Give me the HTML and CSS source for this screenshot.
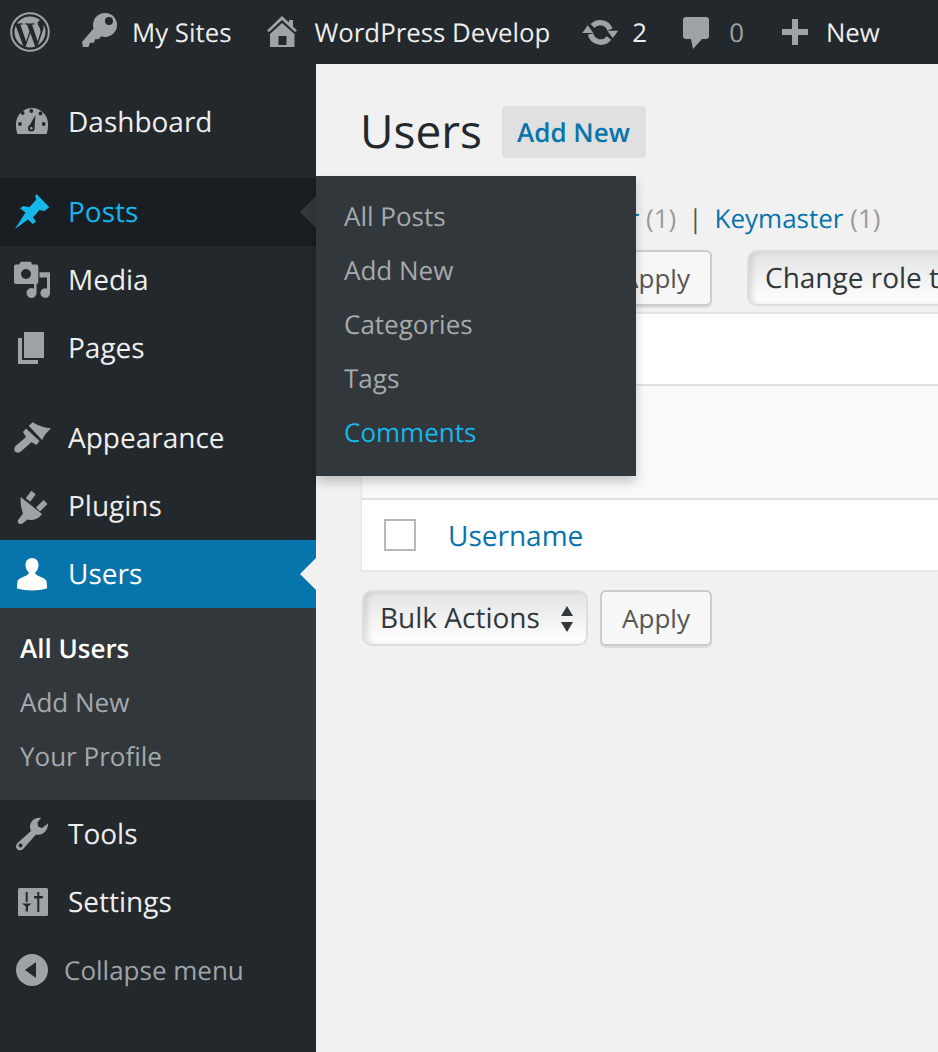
FILE: index.html
```html
<!DOCTYPE html>
<html lang="en">
<head>
<meta charset="utf-8">
<title>Users</title>
<link rel="stylesheet" href="styles.css">
</head>
<body>
<header class="adminbar">
  <a class="bar-item wp"><svg class="bar-logo" viewBox="0 0 40 40"><circle cx="20" cy="20" r="18.8" fill="none" stroke="#9ea3a8" stroke-width="2"/><path fill="#9ea3a8" d="M4.5 20c0 6.100 3.600 11.400 8.700 13.900L5.800 13.700C5 15.600 4.500 17.700 4.500 20zm26-.8c0-1.900-.7-3.200-1.300-4.300-.8-1.300-1.500-2.400-1.500-3.600 0-1.400 1-2.700 2.500-2.700h.2C27.600 6 24 4.500 20 4.500c-5.400 0-10.200 2.800-13 7h1c1.600 0 4.100-.2 4.100-.2.8 0 .9 1.200.1 1.300 0 0-.8.1-1.800.1l5.700 16.900 3.400-10.200-2.400-6.700c-.8 0-1.600-.1-1.600-.1-.8 0-.7-1.300.1-1.300 0 0 2.600.2 4.100.2 1.600 0 4.100-.2 4.100-.2.8 0 .9 1.200.1 1.300 0 0-.8.1-1.800.1l5.600 16.800 1.600-5.200c.7-2.100 1.200-3.700 1.200-5zM20.300 21.200l-4.700 13.600c1.400.4 2.900.6 4.400.6 1.800 0 3.600-.3 5.200-.9l-.1-.2zM33.600 12.400c.1.500.1 1 .1 1.600 0 1.600-.3 3.300-1.200 5.500l-4.700 13.700c4.600-2.700 7.700-7.700 7.700-13.400 0-2.700-.7-5.200-1.900-7.400z"/></svg></a>
  <a class="bar-item sites"><svg class="bar-icon key" viewBox="0 0 36 36"><path fill="#9ea3a8" fill-rule="evenodd" d="M23 0a12 12 0 1 1-4 23.300L17 26l-4 .2-1 3.600H8l-1.500 4.200H1L0 29l11.500-13.500A12 12 0 0 1 23 0zm4 4a4 4 0 1 0 0 8 4 4 0 0 0 0-8z"/></svg><span>My Sites</span></a>
  <a class="bar-item site"><svg class="bar-icon home" viewBox="0 0 30 32"><path fill="#9ea3a8" fill-rule="evenodd" d="M15 0l7 6.500V4h4v6.500l4 4-2 1.500L15 4 2 16l-2-1.500zM15 7l12.500 11v13H3V18zm-3.500 13v9h8v-9z"/></svg><span>WordPress Develop</span></a>
  <a class="bar-item updates"><svg class="bar-icon refresh" viewBox="0 0 36 28"><g fill="none" stroke="#9ea3a8" stroke-width="5.500"><path d="M10.500 8A10.500 10.500 0 0 1 28 11.500"/><path d="M27 20A10.500 10.500 0 0 1 8.500 16"/></g><path fill="#9ea3a8" d="M25.300 12.700h11L30.800 20zM.3 15h11L5.800 7.300z"/></svg><span>2</span></a>
  <a class="bar-item comments"><svg class="bar-icon bubble" viewBox="0 0 26 32"><path fill="#9ea3a8" d="M3 0h20a3 3 0 0 1 3 3v16a3 3 0 0 1-3 3h-4l-9 10-2-10H3a3 3 0 0 1-3-3V3a3 3 0 0 1 3-3z"/></svg><span class="zero">0</span></a>
  <a class="bar-item new"><svg class="bar-icon plus" viewBox="0 0 26 26"><path fill="#9ea3a8" d="M10 0h6v10h10v6H16v10h-6V16H0v-6h10z"/></svg><span>New</span></a>
</header>
<div class="layout">
  <nav class="sidebar">
    <ul class="menu">
      <li class="item dash"><svg class="mi" viewBox="0 0 40 40"><path fill="#9ea3a8" d="M5.500 32C4.500 29 4 27 4 22a16 16 0 0 1 32 0c0 5-.5 7-1.500 10z"/><g fill="#23282d"><circle cx="19.300" cy="9" r="1.900"/><circle cx="10.700" cy="11" r="1.900"/><circle cx="28.500" cy="11.500" r="1.900"/><circle cx="8" cy="22" r="1.900"/><circle cx="31.700" cy="22" r="1.900"/><path d="M23.500 13l-1 12.500-5.700-.7z"/><circle cx="19.300" cy="26.300" r="3.300"/></g><circle cx="19.300" cy="26.300" r="1.300" fill="#9ea3a8"/></svg><span>Dashboard</span></li>
      <li class="item current-hover"><svg class="mi" viewBox="0 0 40 40"><path fill="#15b6e8" d="M3 37l10.500-16.500L8 16.300l3.300-2.300 6 1.300L24 8l-.7-5 1.400-.7 12.600 13-5 3.700-5-1-6.300 7.500 3 4.200-3.300 2.300-4.700-4.500z"/></svg><span>Posts</span><i class="notch dark"></i></li>
      <li class="item"><svg class="mi" viewBox="0 0 40 40"><path fill="#9ea3a8" fill-rule="evenodd" d="M8 3l1-1.300h10L20 4.500h4.500q1.800 0 1.800 2V22q0 2-1.800 2H4q-2 0-2-2V6.500q0-2 2-2h3zm6 6a5 5 0 1 0 0 10 5 5 0 0 0 0-10z"/><path fill="#9ea3a8" d="M27.500 12.300H38V33a4.800 4.800 0 1 1-3-4.400V17.500h-7.500zM22 22.500h2.500V33a5 5 0 1 1-2.500-4.300z"/></svg><span>Media</span></li>
      <li class="item"><svg class="mi" viewBox="0 0 40 40"><path fill="#9ea3a8" d="M12 4h20v26H12zM6 10h4v22h16v4H6z"/></svg><span>Pages</span></li>
      <li class="item spaced"><svg class="mi" viewBox="0 0 40 40"><path fill="#9ea3a8" d="M14 10.500L27.500 23l-3 4-5-3-10 9q-3 3-6 1-2.500-2.500 0-6L14 19l-3-5zM16.700 7.700l4-3.400Q30 10 39 10.300l-5.700 6L30 22z"/></svg><span>Appearance</span></li>
      <li class="item"><svg class="mi" viewBox="0 0 40 40"><path fill="#9ea3a8" d="M8.700 11L30 28q-4 6-12 6l-2.500-.5-5 4q-3 1.500-4.500-1-1-2 2-5l3-4q-3-8-2.300-16.500z"/><path stroke="#9ea3a8" stroke-width="5.500" d="M21.500 6.500L16 14M33.500 16L26 23.500"/></svg><span>Plugins</span></li>
      <li class="item active"><svg class="mi" viewBox="0 0 40 40"><path fill="#fff" d="M20 4c4 0 6.500 3 6.500 7 0 3-1.500 6-3.500 8 1 3 8 4 11 7q1 2 1 8.500-7 2-15 2t-15-2q0-6.500 1-8.500c3-3 10-4 11-7-2-2-3.500-5-3.500-8 0-4 2.500-7 6.500-7z"/></svg><span>Users</span><i class="notch light"></i></li>
      <li class="sub">
        <a class="sub-link strong">All Users</a>
        <a class="sub-link">Add New</a>
        <a class="sub-link">Your Profile</a>
      </li>
      <li class="item"><svg class="mi" viewBox="0 0 40 40"><path fill="#9ea3a8" fill-rule="evenodd" d="M29 4c-6-1-11 3-11 9 0 2 .5 3 1 4L5.500 29q-2 2-1.500 4.500 1.500 3.500 5.500 2.500 1.500-.5 2.500-2l12-13.500c6 1.500 12-3.500 12-10.500v-.5L30 14l-4-1.500-.5-4zM8.500 29.500a2 2 0 1 1 0 4 2 2 0 0 1 0-4z"/></svg><span>Tools</span></li>
      <li class="item"><svg class="mi" viewBox="0 0 40 40"><rect x="6" y="6" width="30" height="28" rx="1.500" fill="#9ea3a8"/><path fill="#23282d" d="M13.700 10h2v10h-2zM10 21.500h9.500L16 24.500v5h-2.300v-5zM25.300 10h2v4h4l-1 2.500h-3V30h-2V16.500h-3L22 14h3.300z"/></svg><span>Settings</span></li>
      <li class="collapse"><svg class="round" viewBox="0 0 32 32"><path fill="#9ea3a8" fill-rule="evenodd" d="M16 0a16 16 0 1 1 0 32 16 16 0 0 1 0-32zm4 8L9 16l11 8z"/></svg><span>Collapse menu</span></li>
    </ul>
  </nav>
  <main class="content">
    <div class="heading"><h1>Users</h1><a class="add-new">Add New</a></div>
    <div class="filters"><a class="flink">Subscriber</a> <span class="count">(1)</span><span class="sep">|</span><a class="flink">Keymaster</a> <span class="count">(1)</span></div>
    <div class="tablenav top">
      <span class="select bulk">Bulk Actions<svg class="arrows" viewBox="0 0 14 26"><path fill="#32373c" d="M7 0l6 10H1zM1 16h12L7 26z"/></svg></span>
      <button class="apply">Apply</button>
      <span class="select role">Change role to...</span>
    </div>
    <div class="table">
      <div class="row head"></div>
      <div class="row middle"></div>
      <div class="row user"><span class="check"></span><a class="uname">Username</a></div>
    </div>
    <div class="tablenav bottom">
      <span class="select bulk">Bulk Actions<svg class="arrows" viewBox="0 0 14 26"><path fill="#32373c" d="M7 0l6 10H1zM1 16h12L7 26z"/></svg></span>
      <button class="apply">Apply</button>
    </div>
  </main>
</div>
<div class="flyout">
  <a>All Posts</a>
  <a>Add New</a>
  <a>Categories</a>
  <a>Tags</a>
  <a class="hl">Comments</a>
</div>
</body>
</html>
```
FILE: styles.css
```css
* { box-sizing: border-box; }
html, body { margin: 0; height: 100%; overflow: hidden; }
body { font-family: "Open Sans", sans-serif; font-size: 28px; text-rendering: geometricPrecision; background: #f1f1f1; color: #32373c; width: 938px; height: 1052px; position: relative; }
.adminbar { height: 64px; background: #23282d; display: flex; align-items: center; color: #eee; font-size: 25.8px; white-space: nowrap; }
.bar-item { display: flex; align-items: center; flex: none; }
.bar-item span { line-height: 64px; }
.wp { margin-left: 10px; margin-right: 32px; }
.bar-logo { width: 40px; height: 40px; display: block; }
.bar-icon { display: block; flex: none; }
.key { width: 36px; height: 36px; margin-right: 14px; margin-top: -2px; }
.sites { margin-right: 36px; }
.home { width: 30px; height: 32px; margin-right: 17px; }
.site { margin-right: 32px; }
.refresh { width: 36px; height: 28px; margin-right: 14px; }
.updates { margin-right: 36px; }
.bubble { width: 26px; height: 32px; margin-right: 20px; margin-top: 2px; }
.zero { color: #9ea3a8; }
.comments { margin-right: 38px; }
.plus { width: 26px; height: 26px; margin-right: 18px; }
.layout { display: flex; height: 988px; }
.sidebar { width: 316px; flex: none; background: #23282d; }
.menu { list-style: none; margin: 0; padding: 24px 0 0; }
.item { height: 68px; display: flex; align-items: center; color: #eee; padding-left: 12px; position: relative; line-height: 68px; }
.item span { position: absolute; left: 68px; top: 0; }
.mi { width: 40px; height: 40px; display: block; flex: none; }
.dash { margin-bottom: 22px; }
.current-hover { background: #191e23; color: #15b6e8; }
.spaced { margin-top: 22px; }
.active { color: #fff; background: #0774ab; }
.notch { position: absolute; right: 0; top: 50%; width: 0; height: 0; margin-top: -16px; border: 16px solid transparent; border-left: 0; }
.notch.dark { border-right-color: #32373c; }
.notch.light { border-right-color: #f1f1f1; }
.sub { background: #32373c; padding: 13px 0 17px; display: flex; flex-direction: column; }
.sub-link { height: 54px; line-height: 54px; font-size: 26px; padding-left: 20px; color: #a5a9ad; }
.sub-link.strong { color: #fff; font-weight: 600; }
.collapse { height: 68px; display: flex; align-items: center; padding-left: 16px; color: #9ea3a8; font-size: 26px; }
.collapse span { margin-left: 16px; }
.round { width: 32px; height: 32px; display: block; flex: none; }
.content { flex: 1; min-width: 0; padding: 42px 0 0 45px; overflow: hidden; }
.heading { display: flex; align-items: center; height: 52px; }
h1 { font-size: 46px; font-weight: 400; margin: 0 0 2px -1px; color: #23282d; line-height: 52px; }
.add-new { margin-left: 20px; width: 144px; height: 52px; line-height: 52px; padding-left: 15px; white-space: nowrap; background: #e0e0e0; border-radius: 4px; font-weight: 600; font-size: 26px; color: #0774ab; }
.filters { margin-top: 40px; height: 40px; line-height: 40px; font-size: 26px; color: #999; white-space: nowrap; padding-left: 149px; }
.flink { color: #0774ab; }
.sep { color: #555; margin: 0 12px; }
.tablenav { display: flex; align-items: center; white-space: nowrap; font-size: 28px; }
.tablenav.top { margin-top: 12px; height: 56px; }
.select { display: inline-flex; align-items: center; flex: none; height: 56px; border: 2px solid #ddd; border-radius: 10px; background: linear-gradient(#e4e4e4, #fff); box-shadow: inset 4px 0 5px rgba(0,0,0,.1); padding-left: 16px; color: #32373c; position: relative; }
.bulk { width: 226px; margin-left: 1px; }
.arrows { position: absolute; right: 12px; top: 14px; width: 14px; height: 26px; }
.apply { flex: none; margin-left: 12px; width: 112px; height: 56px; font: inherit; font-size: 26px; color: #555; background: #f7f7f7; border: 2px solid #ccc; border-radius: 6px; box-shadow: 0 2px 0 #ddd; padding: 0; }
.role { margin-left: 35px; width: 300px; }
.table { margin-top: 6px; background: #f9f9f9; border-top: 2px solid #e5e5e5; border-left: 1px solid #e5e5e5; border-bottom: 1px solid #e5e5e5; box-shadow: 0 1px 2px rgba(0,0,0,.04); }
.row.head { height: 72px; background: #fff; border-bottom: 2px solid #e1e1e1; }
.row.middle { height: 114px; border-bottom: 2px solid #e1e1e1; }
.row.user { height: 70px; background: #fff; display: flex; align-items: center; padding-left: 22px; }
.check { width: 32px; height: 32px; border: 2px solid #b4b9be; background: #fff; flex: none; }
.uname { margin: 2px 0 0 32px; color: #0774ab; }
.tablenav.bottom { margin-top: 19px; height: 56px; }
.flyout { position: absolute; left: 316px; top: 176px; width: 320px; height: 300px; background: #32373c; box-shadow: 0 6px 10px rgba(0,0,0,.2); padding: 13px 0 0 28px; display: flex; flex-direction: column; font-size: 26px; color: #a5a9ad; }
.flyout a { height: 54px; line-height: 54px; }
.flyout .hl { color: #15b6e8; }
```
